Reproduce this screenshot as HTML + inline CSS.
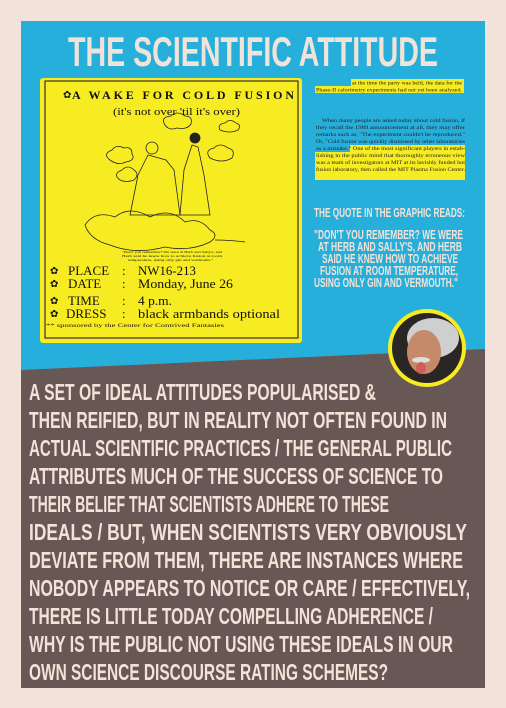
<!DOCTYPE html>
<html><head><meta charset="utf-8"><style>
html,body{margin:0;padding:0;background:#f1e3d9;}
svg{display:block}
</style></head><body>
<svg width="506" height="708" viewBox="0 0 506 708" xmlns="http://www.w3.org/2000/svg">
<rect width="506" height="708" fill="#f1e3d9"/>
<rect x="21" y="21" width="464" height="667" fill="#27afdc"/>
<polygon points="21,370 485,349 485,688 21,688" fill="#675755"/>
<g font-family="'Liberation Sans',sans-serif" font-weight="bold" fill="#f2e3d8">
<text x="68" y="66" font-size="42" textLength="370" lengthAdjust="spacingAndGlyphs">THE SCIENTIFIC ATTITUDE</text>
</g>
<!-- poster -->
<rect x="40" y="78" width="262" height="265" rx="3" fill="#f7ec22"/>
<rect x="45" y="81" width="253" height="257" fill="none" stroke="#333" stroke-width="1.2"/>
<g font-family="'Liberation Serif',serif" fill="#111">
<text x="72" y="99" font-size="12" font-weight="bold" textLength="222" lengthAdjust="spacing">A WAKE FOR COLD FUSION</text>
<text x="113" y="115" font-size="10.5" textLength="127" lengthAdjust="spacingAndGlyphs">(it's not over 'til it's over)</text>
<text x="63" y="98" font-size="10">✿</text>
<text x="122" y="253" font-size="3.5" textLength="100" lengthAdjust="spacingAndGlyphs">"Don't you remember? We were at Herb and Sally's, and</text>
<text x="122" y="257" font-size="3.5" textLength="100" lengthAdjust="spacingAndGlyphs">Herb said he knew how to achieve fusion at room</text>
<text x="128" y="261" font-size="3.5" textLength="85" lengthAdjust="spacingAndGlyphs">temperature, using only gin and vermouth."</text>
<g font-size="13">
<text x="68" y="275">PLACE</text><text x="122" y="275">:</text><text x="138" y="275" textLength="58" lengthAdjust="spacingAndGlyphs">NW16-213</text>
<text x="68" y="288">DATE</text><text x="122" y="288">:</text><text x="138" y="288" textLength="95" lengthAdjust="spacingAndGlyphs">Monday, June 26</text>
<text x="68" y="305">TIME</text><text x="122" y="305">:</text><text x="138" y="305" textLength="34" lengthAdjust="spacingAndGlyphs">4 p.m.</text>
<text x="66" y="318">DRESS</text><text x="122" y="318">:</text><text x="138" y="318" textLength="142" lengthAdjust="spacingAndGlyphs">black armbands optional</text>
</g>
<text x="46" y="327" font-size="5.5" textLength="178" lengthAdjust="spacingAndGlyphs">** sponsored by the Center for Contrived Fantasies</text>
<g font-size="10"><text x="50" y="274">✿</text><text x="50" y="287">✿</text>
<text x="50" y="304">✿</text><text x="50" y="317">✿</text></g>
</g>
<!-- cartoon -->
<g fill="none" stroke="#222" stroke-width="0.8">
<path d="M110,160 q-8,-6 2,-10 q4,-6 12,-2 q8,-2 8,6 q4,6 -6,8 q-8,4 -16,-2z"/>
<path d="M165,125 q-5,-8 6,-9 q6,-6 14,0 q8,0 6,8 q-4,6 -14,4 q-8,3 -12,-3z"/>
<path d="M220,130 q-3,-6 5,-7 q5,-5 11,0 q6,2 2,7 q-8,4 -18,0z"/>
<path d="M210,158 q-6,-8 4,-10 q6,-6 14,0 q8,2 4,10 q-10,6 -22,0z"/>
<path d="M120,180 q-8,-6 2,-10 q6,-6 12,0 q6,4 0,10 q-8,3 -14,0z"/>
<circle cx="152" cy="148" r="6"/><circle cx="195" cy="138" r="5" fill="#222"/>
<path d="M148,155 l-10,20 l-8,40 l50,0 l-6,-45 l-8,-10z"/>
<path d="M192,145 l-8,25 l-4,45 l30,0 l-6,-40 l-6,-28z"/>
<path d="M85,225 q10,-15 30,-8 q15,-12 35,0 q20,-10 35,5 q15,-5 25,8 q10,5 0,12 q-20,10 -45,5 q-30,8 -55,-2 q-20,-5 -25,-20z"/>
<path d="M215,240 q15,0 30,2"/>
</g>
<!-- scan text right -->
<g font-family="'Liberation Serif',serif" font-size="5.5" fill="#222">
<rect x="351" y="79" width="113" height="7" fill="#f7ec22"/>
<rect x="315" y="86" width="149" height="7" fill="#f7ec22"/>
<text x="352" y="84.5" textLength="110" lengthAdjust="spacingAndGlyphs">at the time the party was held, the data for the</text>
<text x="316" y="91.5" textLength="146" lengthAdjust="spacingAndGlyphs">Phase-II calorimetry experiments had not yet been analyzed.</text>
<text x="322" y="122" textLength="143" lengthAdjust="spacingAndGlyphs">When many people are asked today about cold fusion, if</text>
<text x="316" y="129" textLength="149" lengthAdjust="spacingAndGlyphs">they recall the 1989 announcement at all, they may offer</text>
<text x="316" y="136" textLength="149" lengthAdjust="spacingAndGlyphs">remarks such as, "The experiment couldn't be reproduced."</text>
<text x="316" y="143" textLength="149" lengthAdjust="spacingAndGlyphs">Or, "Cold fusion was quickly dismissed by other laboratories</text>
<rect x="350" y="145" width="115" height="7" fill="#f7ec22"/>
<rect x="315" y="152" width="150" height="28" fill="#f7ec22"/>
<text x="316" y="150" textLength="149" lengthAdjust="spacingAndGlyphs">as a mistake." One of the most significant players in estab-</text>
<text x="316" y="157" textLength="149" lengthAdjust="spacingAndGlyphs">lishing in the public mind that thoroughly erroneous view</text>
<text x="316" y="164" textLength="149" lengthAdjust="spacingAndGlyphs">was a team of investigators at MIT at its lavishly funded hot</text>
<text x="316" y="171" textLength="149" lengthAdjust="spacingAndGlyphs">fusion laboratory, then called the MIT Plasma Fusion Center.</text>
</g>
<g font-family="'Liberation Sans',sans-serif" font-weight="bold" fill="#f2e3d8" font-size="13">
<text x="314" y="217" textLength="151" lengthAdjust="spacingAndGlyphs">THE QUOTE IN THE GRAPHIC READS:</text>
<text x="314" y="239" textLength="149" lengthAdjust="spacingAndGlyphs">"DON'T YOU REMEMBER? WE WERE</text>
<text x="318" y="251" textLength="144" lengthAdjust="spacingAndGlyphs">AT HERB AND SALLY'S, AND HERB</text>
<text x="322" y="263" textLength="136" lengthAdjust="spacingAndGlyphs">SAID HE KNEW HOW TO ACHIEVE</text>
<text x="320" y="275" textLength="138" lengthAdjust="spacingAndGlyphs">FUSION AT ROOM TEMPERATURE,</text>
<text x="314" y="287" textLength="144" lengthAdjust="spacingAndGlyphs">USING ONLY GIN AND VERMOUTH."</text>
</g>
<!-- einstein -->
<circle cx="427" cy="348" r="39" fill="#f7ec22"/>
<circle cx="427" cy="348" r="35" fill="#2a2624"/>
<ellipse cx="433" cy="338" rx="26" ry="20" fill="#cfcfcf"/>
<ellipse cx="424" cy="352" rx="17" ry="22" fill="#c48a6a"/>
<ellipse cx="421" cy="360" rx="9" ry="3" fill="#ddd"/>
<ellipse cx="421" cy="368" rx="5" ry="6" fill="#d25b5b"/>
<g font-family="'Liberation Sans',sans-serif" font-weight="bold" fill="#f2e3d8" font-size="23">
<text x="29" y="400" textLength="347" lengthAdjust="spacingAndGlyphs">A SET OF IDEAL ATTITUDES POPULARISED &amp;</text>
<text x="29" y="428" textLength="418" lengthAdjust="spacingAndGlyphs">THEN REIFIED, BUT IN REALITY NOT OFTEN FOUND IN</text>
<text x="29" y="456" textLength="423" lengthAdjust="spacingAndGlyphs">ACTUAL SCIENTIFIC PRACTICES / THE GENERAL PUBLIC</text>
<text x="29" y="484" textLength="414" lengthAdjust="spacingAndGlyphs">ATTRIBUTES MUCH OF THE SUCCESS OF SCIENCE TO</text>
<text x="29" y="512" textLength="360" lengthAdjust="spacingAndGlyphs">THEIR BELIEF THAT SCIENTISTS ADHERE TO THESE</text>
<text x="29" y="540" textLength="438" lengthAdjust="spacingAndGlyphs">IDEALS / BUT, WHEN SCIENTISTS VERY OBVIOUSLY</text>
<text x="29" y="568" textLength="434" lengthAdjust="spacingAndGlyphs">DEVIATE FROM THEM, THERE ARE INSTANCES WHERE</text>
<text x="29" y="596" textLength="441" lengthAdjust="spacingAndGlyphs">NOBODY APPEARS TO NOTICE OR CARE / EFFECTIVELY,</text>
<text x="29" y="624" textLength="404" lengthAdjust="spacingAndGlyphs">THERE IS LITTLE TODAY COMPELLING ADHERENCE /</text>
<text x="29" y="652" textLength="424" lengthAdjust="spacingAndGlyphs">WHY IS THE PUBLIC NOT USING THESE IDEALS IN OUR</text>
<text x="29" y="680" textLength="359" lengthAdjust="spacingAndGlyphs">OWN SCIENCE DISCOURSE RATING SCHEMES?</text>
</g>
</svg>
</body></html>
